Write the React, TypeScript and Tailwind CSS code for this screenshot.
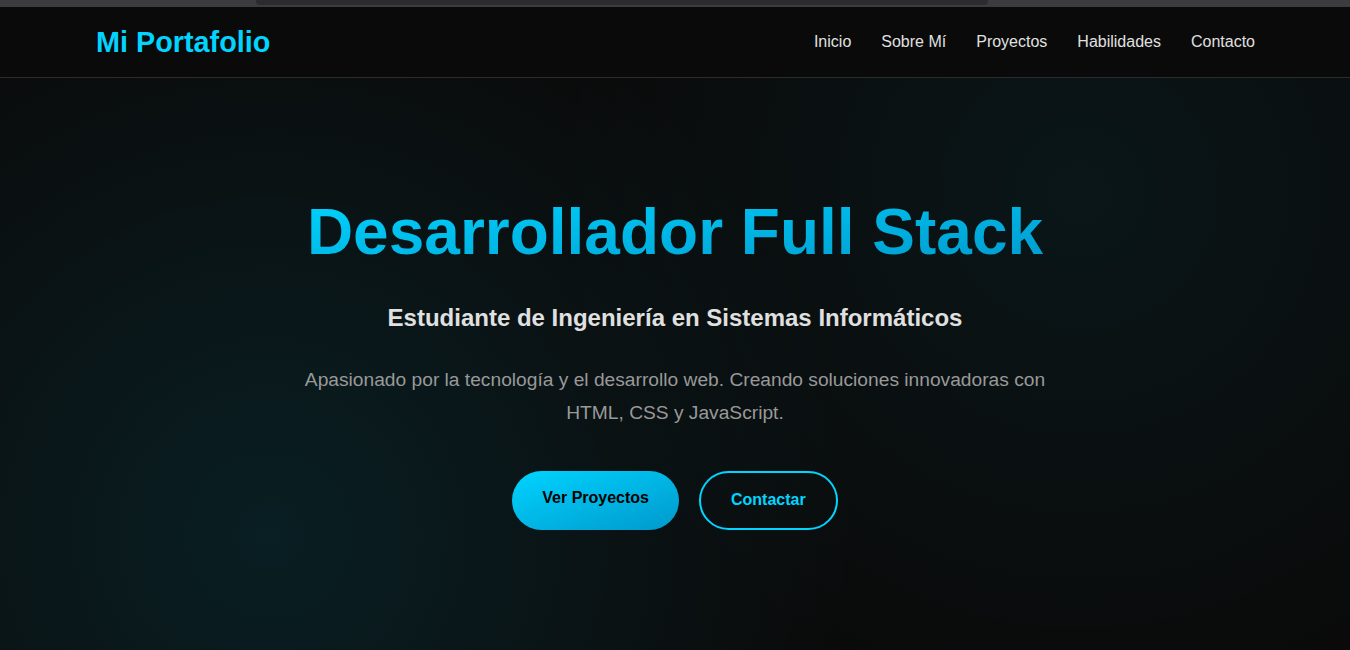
const links = ["Inicio", "Sobre Mí", "Proyectos", "Habilidades", "Contacto"];

function Header() {
  return (
    <header className="bg-[#0a0a0a] border-b border-[#2c2c2c]">
      <nav className="max-w-[1200px] mx-auto px-5 h-[70px] flex items-center justify-between">
        <a className="pl-px text-[28.8px] leading-[1.2] font-bold text-[#00d4ff]">
          Mi Portafolio
        </a>
        <ul className="flex items-center gap-[30px]">
          {links.map((link) => (
            <li key={link}>
              <a className="text-base text-[#e0e0e0]">{link}</a>
            </li>
          ))}
        </ul>
      </nav>
    </header>
  );
}

function Hero() {
  return (
    <section className="min-h-[572px] bg-[#0a0a0a] bg-[image:radial-gradient(circle_at_20%_80%,rgba(0,212,255,0.1)_0%,transparent_50%),radial-gradient(circle_at_80%_20%,rgba(0,212,255,0.06)_0%,transparent_45%)]">
      <div className="flex flex-col items-center text-center pt-[116px] px-5">
        <h1 className="inline-block text-[64px] leading-[1.2] font-bold bg-gradient-to-br from-[#00d4ff] to-[#0099cc] bg-clip-text text-transparent mb-[33px]">
          Desarrollador Full Stack
        </h1>
        <h2 className="text-2xl leading-[1.2] font-bold text-[#e0e0e0] mb-[30px]">
          Estudiante de Ingeniería en Sistemas Informáticos
        </h2>
        <p className="max-w-[750px] text-[19.2px] leading-[33px] text-[#999] mb-[42px]">
          Apasionado por la tecnología y el desarrollo web. Creando soluciones
          innovadoras con HTML, CSS y JavaScript.
        </p>
        <div className="flex gap-5">
          {/* primary */}
          <a className="h-[59px] px-[30px] pb-1 flex items-center rounded-full bg-gradient-to-br from-[#00d4ff] to-[#0099cc] text-black font-bold text-base">
            Ver Proyectos
          </a>
          <a className="h-[59px] px-[30px] flex items-center rounded-full border-2 border-[#00d4ff] text-[#00d4ff] font-bold text-base">
            Contactar
          </a>
        </div>
      </div>
    </section>
  );
}

export default function App() {
  return (
    <div className="bg-[#0a0a0a] font-['Liberation_Sans',Arial,sans-serif] min-h-[650px]">
      <div className="h-[7px] bg-[#3c3b40]">
        <div className="ml-[256px] w-[732px] h-[5px] bg-[#2c2b30] rounded-b-sm" />
      </div>
      <Header />
      <Hero />
    </div>
  );
}
